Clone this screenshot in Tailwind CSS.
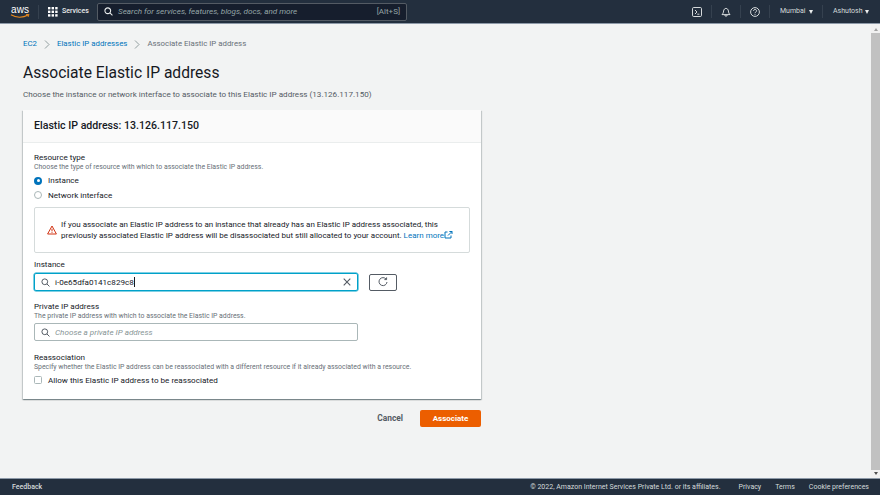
<!DOCTYPE html>
<html lang="en">
<head>
    <meta charset="UTF-8">
    <title>Associate Elastic IP address</title>
    <script src="https://cdn.jsdelivr.net/npm/@tailwindcss/browser@4"></script>
</head>
<body class="w-[880px] h-[495px] overflow-hidden flex flex-col bg-[#f2f3f3] font-['Roboto',sans-serif] text-[#16191f]">
<!-- top nav -->
<header class="h-[24px] shrink-0 flex items-center bg-[#232f3e] border-b border-[#8d99a8] text-[#d5dbdb] text-[7px]">
    <div class="w-[38px] shrink-0 flex flex-col items-center pl-[2px]">
        <span class="text-white text-[10px] leading-[9px] font-['Liberation_Sans',sans-serif]">aws</span>
        <svg width="20" height="5" viewBox="0 0 20 5"><path d="M1 0.8C6 4 13 4 18 1" fill="none" stroke="#ec8a1c" stroke-width="1.2"/><path d="M16 0.6l3 -0.2l-1 2.6" fill="none" stroke="#ec8a1c" stroke-width="0.9"/></svg>
    </div>
    <div class="w-px h-[14px] bg-[#35414f]"></div>
    <div class="w-[58px] shrink-0 flex items-center pl-[9px] gap-[4px]">
        <svg width="10" height="10" viewBox="0 0 10 10" fill="#fff"><rect width="2.4" height="2.4"/><rect x="3.6" width="2.4" height="2.4"/><rect x="7.2" width="2.4" height="2.4"/><rect y="3.6" width="2.4" height="2.4"/><rect x="3.6" y="3.6" width="2.4" height="2.4"/><rect x="7.2" y="3.6" width="2.4" height="2.4"/><rect y="7.2" width="2.4" height="2.4"/><rect x="3.6" y="7.2" width="2.4" height="2.4"/><rect x="7.2" y="7.2" width="2.4" height="2.4"/></svg>
        <span class="text-[#eaeded] font-medium">Services</span>
    </div>
    <div class="w-[310px] h-[18px] shrink-0 flex items-center px-[6px] bg-[#161e2d] border border-[#545b64] rounded-[2px]">
        <svg width="9" height="9" viewBox="0 0 10 10" fill="none" stroke="#eaeded" stroke-width="1.2"><circle cx="4.2" cy="4.2" r="3.2"/><path d="M6.6 6.6L9.4 9.4"/></svg>
        <span class="ml-[5px] italic text-[8.1px] text-[#95a5a6]">Search for services, features, blogs, docs, and more</span>
        <span class="ml-auto text-[#95a5a6] text-[8px]">[Alt+S]</span>
    </div>
    <div class="ml-auto flex items-center h-full text-[#d5dbdb]">
        <svg width="10" height="10" viewBox="0 0 10 10" fill="none" stroke="#eaeded" stroke-width="0.9"><rect x="0.5" y="0.5" width="9" height="9" rx="1.2"/><path d="M3 3l2 2l-2 2M5.3 7.2H7.4"/></svg>
        <div class="w-px h-[13px] bg-[#35414f] ml-[9px]"></div>
        <svg class="ml-[9px]" width="10" height="10" viewBox="0 0 10 10" fill="none" stroke="#eaeded" stroke-width="0.9"><path d="M1 7.6h8C7.8 6.4 7.6 5.4 7.4 4C7.2 2.4 6.2 1.4 5 1.4S2.8 2.4 2.6 4C2.4 5.4 2.2 6.4 1 7.6Z"/><path d="M3.8 8a1.2 1.2 0 0 0 2.4 0"/></svg>
        <div class="w-px h-[13px] bg-[#35414f] ml-[9px]"></div>
        <svg class="ml-[9px]" width="10" height="10" viewBox="0 0 10 10" fill="none" stroke="#eaeded" stroke-width="0.9"><circle cx="5" cy="5" r="4.4"/><path d="M3.5 4C3.5 2 6.6 2 6.6 3.9C6.6 5 5 5 5 6.2M5 7v0.8"/></svg>
        <div class="w-px h-[13px] bg-[#35414f] ml-[9px]"></div>
        <span class="ml-[10px] w-[26px]">Mumbai</span>
        <span class="ml-[3px] w-0 h-0 border-x-[2.5px] border-x-transparent border-t-[4px] border-t-[#eaeded]"></span>
        <div class="w-px h-[13px] bg-[#35414f] ml-[9px]"></div>
        <span class="ml-[10px] w-[29px]">Ashutosh</span>
        <span class="ml-[3px] mr-[11px] w-0 h-0 border-x-[2.5px] border-x-transparent border-t-[4px] border-t-[#eaeded]"></span>
    </div>
</header>

<div class="flex-1 flex min-h-0">
    <main class="flex-1 min-w-0 pl-[23px] pr-[390px]">
        <!-- breadcrumb -->
        <nav class="mt-[14px] h-[12px] flex items-center text-[7.85px] whitespace-nowrap">
            <span class="text-[#0073bb]">EC2</span>
            <svg class="mx-[7px]" width="6" height="9" viewBox="0 0 6 9" fill="none" stroke="#879596" stroke-width="0.9"><path d="M1 0.5l4 4l-4 4"/></svg>
            <span class="text-[#0073bb]">Elastic IP addresses</span>
            <svg class="mx-[7px]" width="6" height="9" viewBox="0 0 6 9" fill="none" stroke="#879596" stroke-width="0.9"><path d="M1 0.5l4 4l-4 4"/></svg>
            <span class="text-[#687078]">Associate Elastic IP address</span>
        </nav>
        <h1 class="mt-[12px] text-[15.6px] leading-[22px] whitespace-nowrap">Associate Elastic IP address</h1>
        <p class="mt-[5px] text-[8.1px] leading-[11px] text-[#545b64] whitespace-nowrap">Choose the instance or network interface to associate to this Elastic IP address (13.126.117.150)</p>

        <!-- card -->
        <section class="mt-[10px] w-[458px] h-[289px] bg-white shadow-[0_1px_1px_0_rgba(0,28,36,0.3),1px_1px_1px_0_rgba(0,28,36,0.15),-1px_1px_1px_0_rgba(0,28,36,0.15)]">
            <div class="h-[33px] flex items-center px-[11px] bg-[#fafafa] border-b border-[#eaeded] text-[10.6px] font-medium">Elastic IP address: 13.126.117.150</div>
            <div class="px-[11px] pt-[9px]">
                <div class="text-[8.1px] leading-[11px] text-[#16191f]">Resource type</div>
                <div class="text-[6.9px] leading-[9px] text-[#687078] whitespace-nowrap">Choose the type of resource with which to associate the Elastic IP address.</div>
                <div class="mt-[1px] h-[15px] flex items-center text-[8.1px]">
                    <span class="w-[8px] h-[8px] rounded-full bg-[#0073bb] flex items-center justify-center"><span class="w-[3px] h-[3px] rounded-full bg-white"></span></span>
                    <span class="ml-[6px]">Instance</span>
                </div>
                <div class="h-[14px] flex items-center text-[8.1px]">
                    <span class="w-[8px] h-[8px] rounded-full border border-[#aab7b8] bg-white"></span>
                    <span class="ml-[6px]">Network interface</span>
                </div>
                <div class="mt-[5px] w-[436px] h-[46px] flex items-center pl-[12px] border border-[#d5dbdb] rounded-[2px]">
                    <svg class="shrink-0" width="10" height="10" viewBox="0 0 10 10" fill="none" stroke="#d13212" stroke-width="1"><path d="M5 1L9.4 9H0.6Z" stroke-linejoin="round"/><path d="M5 3.8V6.4M5 7.2V8"/></svg>
                    <p class="ml-[4px] text-[8px] leading-[11.5px] whitespace-nowrap">If you associate an Elastic IP address to an instance that already has an Elastic IP address associated, this<br>previously associated Elastic IP address will be disassociated but still allocated to your account. <span class="text-[#0073bb]">Learn more</span><svg class="inline align-[-1px]" width="9" height="8" viewBox="0 0 9 8" fill="none" stroke="#0073bb" stroke-width="1"><path d="M3.5 1H1v6h6V4.5M4 4.5L8 0.5M5.4 0.5H8V3"/></svg></p>
                </div>

                <div class="mt-[6px] text-[8.1px] leading-[11px]">Instance</div>
                <div class="mt-[3px] flex items-center">
                    <div class="w-[324px] h-[18px] flex items-center px-[6px] border border-[#00a1c9] shadow-[0_0_0_0.5px_#00a1c9] rounded-[2px]">
                        <svg width="9" height="9" viewBox="0 0 10 10" fill="none" stroke="#545b64" stroke-width="1.1"><circle cx="4.2" cy="4.2" r="3.2"/><path d="M6.6 6.6L9.4 9.4"/></svg>
                        <span class="ml-[5px] text-[8.1px]">i-0e65dfa0141c829c8</span>
                        <span class="w-px h-[10px] bg-[#16191f]"></span>
                        <svg class="ml-auto" width="8" height="8" viewBox="0 0 8 8" fill="none" stroke="#545b64" stroke-width="1.1"><path d="M0.7 0.7L7.3 7.3M7.3 0.7L0.7 7.3"/></svg>
                    </div>
                    <div class="ml-[11px] w-[28px] h-[17px] flex items-center justify-center border border-[#545b64] rounded-[2px]">
                        <svg width="10" height="10" viewBox="0 0 10 10" fill="none" stroke="#545b64" stroke-width="1"><path d="M8.2 2.2A4 4 0 1 0 9 5"/><path d="M8.6 0.4V2.6H6.4"/></svg>
                    </div>
                </div>

                <div class="mt-[10px] text-[8.1px] leading-[11px]">Private IP address</div>
                <div class="text-[6.9px] leading-[8px] text-[#687078] whitespace-nowrap">The private IP address with which to associate the Elastic IP address.</div>
                <div class="mt-[3px] w-[324px] h-[18px] flex items-center px-[6px] border border-[#aab7b8] rounded-[2px]">
                    <svg width="9" height="9" viewBox="0 0 10 10" fill="none" stroke="#545b64" stroke-width="1.1"><circle cx="4.2" cy="4.2" r="3.2"/><path d="M6.6 6.6L9.4 9.4"/></svg>
                    <span class="ml-[5px] italic text-[8.1px] text-[#879596]">Choose a private IP address</span>
                </div>

                <div class="mt-[11px] text-[8.1px] leading-[11px]">Reassociation</div>
                <div class="text-[6.9px] leading-[8px] text-[#687078] whitespace-nowrap">Specify whether the Elastic IP address can be reassociated with a different resource if it already associated with a resource.</div>
                <div class="mt-[3px] h-[12px] flex items-center text-[8.1px]">
                    <span class="w-[8px] h-[8px] rounded-[1.5px] border border-[#aab7b8] bg-white"></span>
                    <span class="ml-[6px]">Allow this Elastic IP address to be reassociated</span>
                </div>
            </div>
        </section>

        <!-- actions -->
        <div class="mt-[11px] w-[458px] flex items-center justify-end">
            <span class="text-[8.4px] font-bold text-[#545b64]">Cancel</span>
            <span class="ml-[17px] w-[61px] h-[17px] flex items-center justify-center bg-[#ec5e00] rounded-[2px] text-[8px] font-bold text-white">Associate</span>
        </div>
    </main>

    <!-- scrollbar -->
    <div class="w-[9px] shrink-0 flex flex-col items-center bg-[#f1f1f1]">
        <span class="mt-[4px] w-0 h-0 border-x-[2.5px] border-x-transparent border-b-[3px] border-b-[#a3a3a3]"></span>
        <div class="mt-[2px] w-full flex-1 bg-[#c1c1c1]"></div>
        <span class="mt-[2px] mb-[3px] w-0 h-0 border-x-[2.5px] border-x-transparent border-t-[3px] border-t-[#505050]"></span>
    </div>
</div>

<!-- footer -->
<footer class="h-[17px] shrink-0 flex items-center pl-[12px] pr-[11px] bg-[#232f3e] border-t border-[#8d99a8] text-[7px] text-[#d5dbdb] whitespace-nowrap">
    <span class="font-medium">Feedback</span>
    <span class="ml-auto">© 2022, Amazon Internet Services Private Ltd. or its affiliates.</span>
    <span class="ml-[18px]">Privacy</span>
    <span class="ml-[14px]">Terms</span>
    <span class="ml-[14px]">Cookie preferences</span>
</footer>
</body>
</html>
